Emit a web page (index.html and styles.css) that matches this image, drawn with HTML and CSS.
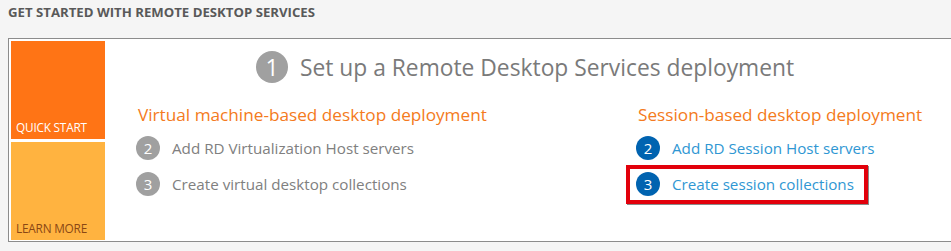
FILE: index.html
```html
<!DOCTYPE html>
<html lang="en">
<head>
<meta charset="UTF-8" />
<title>Get Started with Remote Desktop Services</title>
<link rel="stylesheet" href="styles.css">
</head>
<body>
  <div class="page-title">GET STARTED WITH REMOTE DESKTOP SERVICES</div>

  <div class="panel">
    <div class="tiles">
      <div class="tile tile-quick">QUICK START</div>
      <div class="tile tile-learn">LEARN MORE</div>
    </div>

    <div class="content">
      <div class="step-title">
        <span class="num num-big">1</span>
        <span>Set up a Remote Desktop Services deployment</span>
      </div>

      <div class="columns">
        <div class="column">
          <div class="column-head">Virtual machine-based desktop deployment</div>
          <div class="item">
            <span class="num">2</span>
            <span>Add RD Virtualization Host servers</span>
          </div>
          <div class="item">
            <span class="num">3</span>
            <span>Create virtual desktop collections</span>
          </div>
        </div>

        <div class="column">
          <div class="column-head">Session-based desktop deployment</div>
          <div class="item item-link">
            <span class="num">2</span>
            <a href="#">Add RD Session Host servers</a>
          </div>
          <div class="item item-link highlight">
            <span class="num">3</span>
            <a href="#">Create session collections</a>
          </div>
        </div>
      </div>
    </div>
  </div>
</body>
</html>
```

FILE: styles.css
```css
html, body {
  margin: 0;
  padding: 0;
  height: 100%;
  overflow: hidden;
}
body {
  background: #f5f5f5;
  font-family: "Open Sans", "Noto Sans", sans-serif;
  padding: 0 0 0 8px;
}
.page-title {
  font-size: 13.2px;
  font-weight: 700;
  color: #595959;
  height: 38px;
  line-height: 24px;
}
.panel {
  display: flex;
  width: 960px;
  height: 202px;
  border: 1px solid #8c8c8c;
  border-right: none;
  background: #fff;
}
.tiles {
  display: flex;
  flex-direction: column;
  gap: 3px;
  padding: 2px 0 1px 2px;
  width: 94px;
}
.tile {
  flex: 1;
  display: flex;
  align-items: flex-end;
  padding: 0 0 4px 5px;
  font-size: 11.8px;
  letter-spacing: -0.2px;
}
.tile-quick {
  background: #ff7415;
  color: #fff;
}
.tile-learn {
  background: #ffb340;
  color: #8a4714;
}
.content {
  flex: 1;
  padding: 12px 0 0 31px;
}
.step-title {
  display: flex;
  align-items: center;
  gap: 12px;
  height: 32px;
  padding-left: 120px;
  font-size: 22.8px;
  color: #7a7a7a;
}
.num {
  display: inline-flex;
  align-items: center;
  justify-content: center;
  width: 24px;
  height: 24px;
  border-radius: 50%;
  background: #a0a0a0;
  color: #fff;
  font-size: 15px;
  flex: none;
}
.num-big {
  width: 32px;
  height: 32px;
  font-size: 23px;
}
.columns {
  display: grid;
  grid-template-columns: 500px 300px;
  margin-top: 20px;
}
.column-head {
  font-size: 17.2px;
  color: #f47a20;
  line-height: 24px;
  padding-left: 2px;
  margin-bottom: 9px;
}
.item {
  display: flex;
  align-items: center;
  gap: 12px;
  height: 24px;
  margin-bottom: 12px;
  font-size: 15.2px;
  color: #808080;
}
.item-link .num {
  background: #0063b0;
}
.item-link a {
  color: #2f97d3;
  text-decoration: none;
}
.highlight {
  width: max-content;
  border: 4px solid #e2000b;
  box-shadow: 1px 1px 0 #8a8a8a;
  margin: -7px 0 0 -10px;
  padding: 3px 10px 4px 6px;
}
```
